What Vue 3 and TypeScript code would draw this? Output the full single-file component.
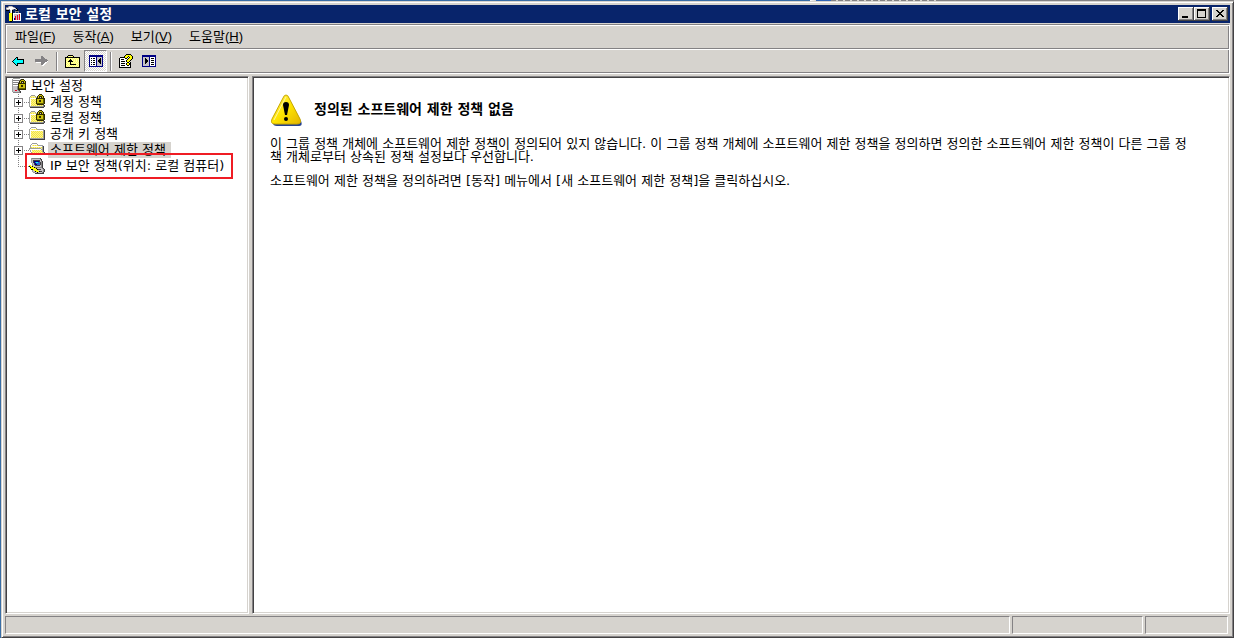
<script setup lang="ts">
interface Pixel { x: number; y: number; w: number; fill: string }
interface Icon { w: number; h: number; px: Pixel[] }

const palette: Record<string, string> = {
  k: '#000000', w: '#ffffff', y: '#ffff63', Y: '#ffff00', o: '#636100', g: '#848284', s: '#c6c3c6',
  n: '#000084', b: '#3165ce', c: '#00ffff', r: '#e70021', p: '#ffffb5', d: '#424142',
  q: '#efe342', v: '#fff38c', L: '#cec310', m: '#9c9e9c', D: '#312c00',
}

function icon(rows: string[]): Icon {
  const px: Pixel[] = []
  rows.forEach((row, y) => {
    for (let x = 0; x < row.length;) {
      const ch = row[x]
      let end = x + 1
      while (end < row.length && row[end] === ch) end++
      if (palette[ch]) px.push({ x, y, w: end - x, fill: palette[ch] })
      x = end
    }
  })
  return { w: Math.max(...rows.map((r) => r.length)), h: rows.length, px }
}

const icons: Record<string, Icon> = {
  app: icon([
    '..gsssg.........',
    'ggswwwwsg.......',
    'swwwwwwwwsk.....',
    'gssgwwsg.gsk....',
    'kkk.swk...kk....',
    '....swk..gggg...',
    '...kswk..g..g...',
    '...YYYkwwwwwwww.',
    '...YYYkwsssssrw.',
    '...YYYkwsssrsrw.',
    '...YYYkwsrsrsrw.',
    '...YYYkwsrsrsrw.',
    '...YYYkwnrsrsrw.',
    '...YYYkwnrsrsrw.',
    '...YYYkwwwwwwww.',
    '....kk..........',
  ]),
  back: icon([
    '....kk......',
    '...kck......',
    '..kcckkkkkkk',
    '.kccccccccck',
    'kcccccccccck',
    '.kccccccccck',
    '..kcckkkkkkk',
    '...kck......',
    '....kk......',
  ]),
  forward: icon([
    '......gg.....',
    '......ggg....',
    '......gggg...',
    'gggggggggggg.',
    'ggggggggggggg',
    'ggggggggggggw',
    '.wwwwwggggww.',
    '......gggww..',
    '......ggww...',
    '.......ww....',
  ]),
  up: icon([
    '...kkkkk.......',
    '..kypypyk......',
    'kkkkkkkkkkkkkkk',
    'kypypypypypypyk',
    'kpypykypypypypk',
    'kypykkkpypypypk',
    'kpykkkkkypypypk',
    'kypypkpypypypyk',
    'kpypykypypypypk',
    'kypypkkkkkkypyk',
    'kpypypypypypypk',
    'kypypypypypypyk',
    'kkkkkkkkkkkkkkk',
  ]),
  treePane: icon([
    'nnnnnnnnnnnnnn',
    'nnnnnnnnnnnnnn',
    'nwwwwwwnsssssn',
    'nwkwkkwnsssksn',
    'nwwwwwwnsskksn',
    'nwkwkkwnskkksn',
    'nwwwwwwnskkksn',
    'nwkwkkwnsskksn',
    'nwwwwwwnsssksn',
    'nwkwkkwnsssssn',
    'nwwwwwwnsssssn',
    'nnnnnnnnnnnnnn',
  ]),
  help: icon([
    '.......kkkkk...',
    '......kYYYYYk..',
    '.....kYYYkYYYk.',
    '.kkkkkYYkwkYYk.',
    'kwwwwwkkwkYYYk.',
    'kwkkkwwwkYYYk..',
    'kwwwwwwkYYYk...',
    'kwkkkkwkYYk....',
    'kwwwwwwwkkwk...',
    'kwkkkkwkYYkk...',
    'kwwwwwwkYYkk...',
    'kwkkkkwwkkwk...',
    'kwwwwwwwwwwk...',
    'kkkkkkkkkkkk...',
  ]),
  actionPane: icon([
    'nnnnnnnnnnnnnn',
    'nnnnnnnnnnnnnn',
    'nssssssnwwwwwn',
    'nssksssnwkkkwn',
    'nsskkssnwwwwwn',
    'nsskkksnwkkkwn',
    'nsskkksnwwwwwn',
    'nsskkssnwkkkwn',
    'nssksssnwwwwwn',
    'nssssssnwkkkwn',
    'nssssssnwwwwwn',
    'nnnnnnnnnnnnnn',
  ]),
  server: icon([
    '.mmmmmmm........',
    'mwwwwwwwmDDD....',
    'mgggggggDLLLD...',
    'mwwwwwwDLDDDLD..',
    'mggggggDLDsDLD..',
    'mwwwwwDDDDDDDD..',
    'mgggggDLLLLLLD..',
    'mwwwwwDLLDDLLD..',
    'mssssgDLLDDLLD..',
    'mssssgDLLLLLLD..',
    'mssssgDooooooD..',
    'mssssgDDDDDDDD..',
    'mssrrsgd........',
    'mssssssgd.......',
    '.gggggggd.......',
  ]),
  locked: icon([
    '..........DDD...',
    '..mmmm...DLLLD..',
    '.mvvvvm.DLDDDLD.',
    'mvqvqvqmDLDsDLD.',
    'mwwwwwwDDDDDDDDD',
    'mwqvqvqDLLLLLLoD',
    'mwvqvqvDLLDDLLoD',
    'mwqvqvqDLLDDLLoD',
    'mwvqvqvDLLLLLLoD',
    'mwqvqvqDoooooooD',
    'mwvqvqvqDDDDDDD.',
    'mwqvqvqvqvqvqvgd',
    'mmmmmmmmmmmmmmgd',
    '.dddddddddddddd.',
  ]),
  folder: icon([
    '................',
    '..mmmmm.........',
    '.mwwwwwm........',
    'mwvqvqvqmmmmmmm.',
    'mwwwwwwwwwwwwwmd',
    'mwqvqvqvqvqvqvmd',
    'mwvqvqvqvqvqvqmd',
    'mwqvqvqvqvqvqvmd',
    'mwvqvqvqvqvqvqmd',
    'mwqvqvqvqvqvqvmd',
    'mwvqvqvqvqvqvqmd',
    'mwqvqvqvqvqvqvmd',
    'mmmmmmmmmmmmmmmd',
    '.ddddddddddddddd',
  ]),
  open: icon([
    '................',
    '...mmmmm........',
    '..mwwwwwm.......',
    '.mwvqvqvqmmmmm..',
    '.mwwwwwwwwwwwmd.',
    '.mqvqvqvqvqvqmd.',
    'mmmmmmmmmmmmvmd.',
    'mwwwwwwwwwwwmmd.',
    '.mwqvqvqvqvqvmd.',
    '.mwvqvqvqvqvqmd.',
    '..mqvqvqvqvqvqmd',
  ]),
  computer: icon([
    '..mggggggggd....',
    '..mssssssssgd...',
    '..msdddddddsd...',
    '..msdnnnnndsgd..',
    '..msdnbccbbdgd..',
    '...msdnbbbbdgd..',
    '...msdnnbbbdgd..',
    'YY.mssdddddsgd..',
    'kYYkssssssssgd..',
    '.kYYYkgggggggd..',
    '.YYYYYYksssssgd.',
    '..kkYYYYkdddssgd',
    '...msYYYYsssssgd',
    '...msskYYYkddsgd',
    '....mmsskssssgd',
    '......ddddddddd.',
  ]),
}

const menus = [
  { label: '파일', key: 'F' }, { label: '동작', key: 'A' },
  { label: '보기', key: 'V' }, { label: '도움말', key: 'H' },
]
const tools = [
  { icon: 'back', name: '뒤로' }, { icon: 'forward', name: '앞으로' }, { icon: '', name: 's1' },
  { icon: 'up', name: '한 수준 위로' }, { icon: 'treePane', name: '콘솔 트리 표시', pressed: true },
  { icon: '', name: 's2' }, { icon: 'help', name: '도움말' }, { icon: 'actionPane', name: '작업 창 표시' },
]
const nodes = [
  { label: '계정 정책', icon: 'locked', expand: true },
  { label: '로컬 정책', icon: 'locked', expand: true },
  { label: '공개 키 정책', icon: 'folder', expand: true },
  { label: '소프트웨어 제한 정책', icon: 'open', expand: true, selected: true },
  { label: 'IP 보안 정책(위치: 로컬 컴퓨터)', icon: 'computer', expand: false, marked: true },
]
</script>

<template>
  <div class="desktop">
    <div class="strip"></div>
    <main class="window">
      <header class="title">
        <svg class="art" :width="icons.app.w" :height="icons.app.h"><rect v-for="(p, i) in icons.app.px" :key="i" :x="p.x" :y="p.y" :width="p.w" height="1" :fill="p.fill" /></svg>
        <h1>로컬 보안 설정</h1>
        <button class="cap" aria-label="최소화"><svg class="art" width="12" height="10"><path d="M2 7h6v2H2z" /></svg></button>
        <button class="cap" aria-label="최대화"><svg class="art" width="12" height="10"><path d="M1 0h9v9H1zM2 2v6h7V2z" fill-rule="evenodd" /></svg></button>
        <button class="cap close" aria-label="닫기"><svg class="art" width="12" height="10"><path d="M2 1h2v1h1v1h2V2h1V1h2v1H9v1H8v1H7v1h1v1h1v1h1v1H8V7H7V6H5v1H4v1H2V7h1V6h1V5h1V4H4V3H3V2H2z" /></svg></button>
      </header>

      <div class="bars">
        <nav class="menu">
          <button v-for="m in menus" :key="m.key">{{ m.label }}(<u>{{ m.key }}</u>)</button>
        </nav>
        <div class="tools">
          <template v-for="t in tools" :key="t.name">
            <button v-if="t.icon" :class="{ pressed: t.pressed }" :aria-label="t.name">
              <svg class="art" :width="icons[t.icon].w" :height="icons[t.icon].h"><rect v-for="(p, i) in icons[t.icon].px" :key="i" :x="p.x" :y="p.y" :width="p.w" height="1" :fill="p.fill" /></svg>
            </button>
            <span v-else class="sep"></span>
          </template>
        </div>
      </div>

      <div class="panes">
        <section class="pane tree">
          <div class="row root">
            <span class="ico"><svg class="art" :width="icons.server.w" :height="icons.server.h"><rect v-for="(p, i) in icons.server.px" :key="i" :x="p.x" :y="p.y" :width="p.w" height="1" :fill="p.fill" /></svg></span>
            <span class="label">보안 설정</span>
          </div>
          <ul>
            <li v-for="n in nodes" :key="n.label" class="row" :class="{ marked: n.marked }">
              <span class="branch"><button v-if="n.expand" class="plus" :aria-label="n.label + ' 확장'"></button></span>
              <span class="ico"><svg class="art" :width="icons[n.icon].w" :height="icons[n.icon].h"><rect v-for="(p, i) in icons[n.icon].px" :key="i" :x="p.x" :y="p.y" :width="p.w" height="1" :fill="p.fill" /></svg></span>
              <span class="label" :class="{ selected: n.selected }">{{ n.label }}</span>
            </li>
          </ul>
        </section>
        <section class="pane detail">
          <div class="heading">
            <svg width="32" height="32" viewBox="-1 0 32 32">
              <defs><linearGradient id="warn" x1="0" y1="0" x2="1" y2="1"><stop offset="0" stop-color="#fff06a" /><stop offset=".5" stop-color="#ffe500" /><stop offset="1" stop-color="#e3b400" /></linearGradient></defs>
              <path d="M17 3L30 27Q32 32 28 32H6Q2 32 2 29Z" fill="#26428f" />
              <path d="M15 1Q17 1 18 4L29 25Q31 30 26 30H4Q-1 30 1 25L12 4Q13 1 15 1Z" fill="url(#warn)" stroke="#c9a800" />
              <path d="M15 3L3 26" stroke="#fff6a0" fill="none" />
              <path d="M12 11Q12 8 15 8T18 11L16 21H14Z" fill="#000" /><circle cx="15" cy="25" r="2" fill="#000" />
            </svg>
            <h2>정의된 소프트웨어 제한 정책 없음</h2>
          </div>
          <p>이 그룹 정책 개체에 소프트웨어 제한 정책이 정의되어 있지 않습니다. 이 그룹 정책 개체에 소프트웨어 제한 정책을 정의하면 정의한 소프트웨어 제한 정책이 다른 그룹 정<br>책 개체로부터 상속된 정책 설정보다 우선합니다.</p>
          <p>소프트웨어 제한 정책을 정의하려면 [동작] 메뉴에서 [새 소프트웨어 제한 정책]을 클릭하십시오.</p>
        </section>
      </div>

      <footer class="status"><div class="main"></div><div class="mid"></div><div class="end"></div></footer>
    </main>
  </div>
</template>

<style>
body { margin: 0; }
</style>

<style scoped>
* { box-sizing: border-box; }
.desktop {
  display: flex; flex-direction: column; height: 100vh; padding-left: 1px; overflow: hidden;
  background: #396da5; color: #000;
  font: 13px/16px "DejaVu Sans", "Noto Sans CJK KR", sans-serif;
}
.strip {
  flex: none; height: 1px;
  background: linear-gradient(90deg, #396da5 809px, #fff 809px, #d6d3ce 815px, #3165b5 815px, #3165b5 830px, transparent 830px),
    repeating-linear-gradient(90deg, #848284 0 5px, #d6d3ce 5px 7px) 830px 0 / 105px 1px no-repeat, #848284;
}
.window {
  flex: 1; min-height: 0; display: flex; flex-direction: column; padding: 3px; background: #d6d3ce;
  border: 1px solid; border-color: #d6d3ce #424142 #424142 #d6d3ce;
  box-shadow: inset 1px 1px #fff, inset -1px -1px #848284;
}
button { padding: 0; border: 0; background: none; color: inherit; font: inherit; }
h1, h2, p, ul { margin: 0; padding: 0; }
.art { display: block; shape-rendering: crispEdges; overflow: visible; }
.title { flex: none; display: flex; align-items: center; height: 18px; padding: 0 2px 0 1px; background: #08246b; color: #fff; }
.title h1 { flex: 1; margin-left: 3px; font-size: 14px; line-height: 16px; font-weight: 700; }
.cap {
  width: 16px; height: 14px; padding: 2px; background: #d6d3ce; color: #000;
  box-shadow: inset -1px -1px #424142, inset 1px 1px #fff, inset -2px -2px #848284;
}
.close { margin-left: 2px; }
.bars { flex: none; margin: 1px 0 2px; border: 1px solid; border-color: #848284 #fff #fff #848284; box-shadow: inset 1px 1px #fff, inset -1px -1px #848284; }
.menu { display: flex; gap: 1px; height: 24px; padding-left: 1px; border-bottom: 1px solid #848284; font-family: "Liberation Sans", "Noto Sans CJK KR", sans-serif; }
.menu button { padding: 0 8px; line-height: 22px; }
.tools { display: flex; align-items: center; height: 24px; padding: 1px; box-shadow: inset 1px 1px #fff, inset -1px -1px #848284; }
.tools button { display: grid; place-items: center; width: 23px; height: 22px; padding-right: 1px; }
.tools .pressed { padding: 0; border: 1px solid; border-color: #848284 #fff #fff #848284; background: repeating-conic-gradient(#fff 0 25%, #d6d3ce 0 50%) 0 0 / 2px 2px; }
.sep { width: 2px; height: 19px; margin: 0 3px; border-left: 1px solid #848284; border-right: 1px solid #fff; }
.panes { flex: 1; min-height: 0; display: flex; gap: 3px; }
.pane { border: 1px solid; border-color: #848284 #fff #fff #848284; box-shadow: inset 1px 1px #424142, inset -1px -1px #d6d3ce; background: #fff; padding: 1px; }
.tree { flex: none; width: 244px; }
.detail { flex: 1; min-width: 0; padding: 17px 36px 0 17px; }
.row { position: relative; display: flex; height: 16px; list-style: none; }
.root { padding-left: 5px; }
.ico { flex: none; width: 16px; height: 16px; }
.label { margin-left: 1px; padding: 0 2px; white-space: nowrap; }
li .label { margin-left: 3px; }
.selected { background: #d6d3ce; padding-right: 5px; }
.branch {
  flex: none; width: 15px; margin-left: 7px;
  background: repeating-linear-gradient(90deg, #848284 0 1px, transparent 1px 2px) 4px 8px / 11px 1px no-repeat,
    repeating-linear-gradient(#848284 0 1px, transparent 1px 2px) 4px 0 / 1px 16px no-repeat;
}
.marked .branch { background-size: 11px 1px, 1px 9px; }
.plus {
  display: block; width: 9px; height: 9px; margin-top: 4px; border: 1px solid #848284;
  background: linear-gradient(#000, #000) 1px 3px / 5px 1px no-repeat, linear-gradient(#000, #000) 3px 1px / 1px 5px no-repeat, #fff;
}
.marked::after { content: ""; box-sizing: border-box; position: absolute; left: 18px; top: -5px; width: 208px; height: 26px; border: 2px solid #ef1c24; }
.heading { display: flex; align-items: center; gap: 12px; margin-bottom: 11px; }
.heading h2 { font-size: 14px; line-height: 20px; font-weight: 700; padding-bottom: 2px; }
.detail p { line-height: 13px; margin-bottom: 11px; }
.status { flex: none; display: flex; gap: 2px; height: 20px; padding: 2px 2px 0 0; }
.status div { border: 1px solid; border-color: #848284 #fff #fff #848284; }
.main { flex: 1; }
.mid { width: 131px; }
.end { width: 83px; }
</style>
